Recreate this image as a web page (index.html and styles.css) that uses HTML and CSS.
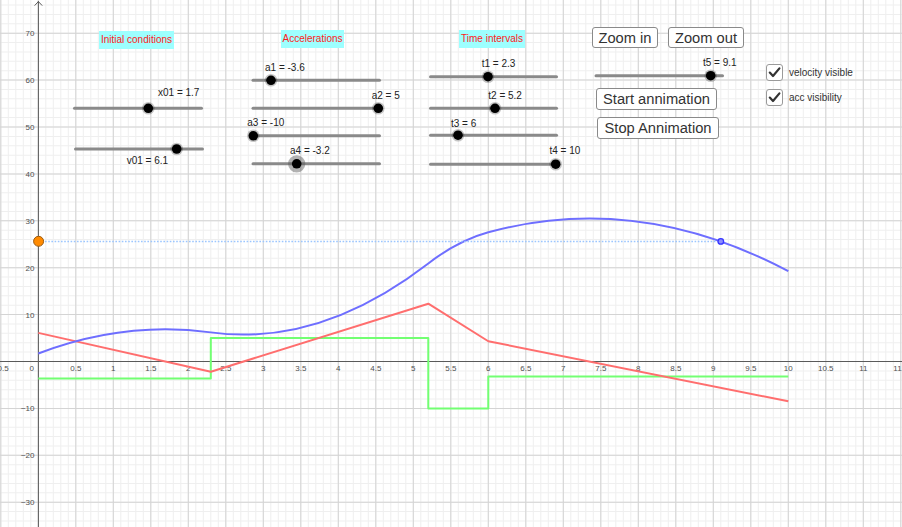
FILE: index.html
```html
<!DOCTYPE html>
<html lang="en">
<head>
<meta charset="utf-8">
<title>Motion graphs</title>
<link rel="stylesheet" href="styles.css">
</head>
<body>
<div class="applet">
  <svg class="canvas" width="902" height="527" viewBox="0 0 902 527" xmlns="http://www.w3.org/2000/svg">
    <!-- grid -->
    <g class="grid">
      <line class="minor" x1="-7.2" y1="263.5" x2="902" y2="263.5" stroke-width="527" stroke-dasharray="1 6.5"/>
      <line class="minor" x1="451" y1="-4.82" x2="451" y2="527" stroke-width="902" stroke-dasharray="1 8.38"/>
      <line class="major" x1="0.3" y1="263.5" x2="902" y2="263.5" stroke-width="527" stroke-dasharray="1 36.5"/>
      <line class="major" x1="451" y1="-14.2" x2="451" y2="527" stroke-width="902" stroke-dasharray="1 45.9"/>
    </g>
    <!-- axes -->
    <g class="axes">
      <line x1="38.4" y1="1" x2="38.4" y2="527"/>
      <line x1="0" y1="361.5" x2="902" y2="361.5"/>
      <polyline points="34.6,5.6 38.4,1.6 42.2,5.6" fill="none"/>
    </g>
    <g class="ticklabels">
      <text class="xl" x="0.8" y="370.7">−0.5</text>
      <text class="yl" x="34" y="370.7">0</text>
      <text class="xl" x="75.8" y="370.7">0.5</text>
      <text class="xl" x="113.3" y="370.7">1</text>
      <text class="xl" x="150.8" y="370.7">1.5</text>
      <text class="xl" x="188.3" y="370.7">2</text>
      <text class="xl" x="225.8" y="370.7">2.5</text>
      <text class="xl" x="263.3" y="370.7">3</text>
      <text class="xl" x="300.8" y="370.7">3.5</text>
      <text class="xl" x="338.3" y="370.7">4</text>
      <text class="xl" x="375.8" y="370.7">4.5</text>
      <text class="xl" x="413.3" y="370.7">5</text>
      <text class="xl" x="450.8" y="370.7">5.5</text>
      <text class="xl" x="488.3" y="370.7">6</text>
      <text class="xl" x="525.8" y="370.7">6.5</text>
      <text class="xl" x="563.3" y="370.7">7</text>
      <text class="xl" x="600.8" y="370.7">7.5</text>
      <text class="xl" x="638.3" y="370.7">8</text>
      <text class="xl" x="675.8" y="370.7">8.5</text>
      <text class="xl" x="713.3" y="370.7">9</text>
      <text class="xl" x="750.8" y="370.7">9.5</text>
      <text class="xl" x="788.3" y="370.7">10</text>
      <text class="xl" x="825.8" y="370.7">10.5</text>
      <text class="xl" x="863.3" y="370.7">11</text>
      <text class="xl" x="900.8" y="370.7">11.5</text>

      <text class="yl" x="34.5" y="36.2">70</text>
      <text class="yl" x="34.5" y="83.1">60</text>
      <text class="yl" x="34.5" y="130">50</text>
      <text class="yl" x="34.5" y="176.9">40</text>
      <text class="yl" x="34.5" y="223.8">30</text>
      <text class="yl" x="34.5" y="270.7">20</text>
      <text class="yl" x="34.5" y="317.6">10</text>
      <text class="yl" x="34.5" y="411.4">−10</text>
      <text class="yl" x="34.5" y="458.3">−20</text>
      <text class="yl" x="34.5" y="505.2">−30</text>
    </g>

    <!-- curves -->
    <polyline class="acc" points="38.3,378.38 210.8,378.38 210.8,338.05 428.3,338.05 428.3,408.4 488.3,408.4 488.3,376.51 788.3,376.51"/>
    <polyline class="vel" points="38.3,332.89 210.8,371.72 428.3,303.72 488.3,341.24 788.3,401.27"/>
    <path class="pos" d="M38.3,353.53 Q124.55,320.63 210.8,332.38 Q319.55,347.21 428.3,263.43 Q458.3,240.32 488.3,232.21 Q638.3,191.69 788.3,271.23"/>

    <line class="trace" x1="45" y1="241.5" x2="716" y2="241.5"/>
    <circle class="pt-orange" cx="38.6" cy="241.3" r="5"/>
    <circle class="pt-blue" cx="720.8" cy="241.4" r="2.8"/>

    <!-- sliders -->
    <g class="slider">
      <line x1="74.5" y1="108.3" x2="201.5" y2="108.3"/>
      <circle class="halo" cx="148.3" cy="108.3" r="6.3"/><circle class="knob" cx="148.3" cy="108.3" r="4.8"/>
      <text x="158" y="96">x01 = 1.7</text>
    </g>
    <g class="slider">
      <line x1="75.5" y1="149" x2="202.5" y2="149"/>
      <circle class="halo" cx="176.7" cy="149" r="6.3"/><circle class="knob" cx="176.7" cy="149" r="4.8"/>
      <text x="126.7" y="164">v01 = 6.1</text>
    </g>

    <g class="slider">
      <line x1="253" y1="80.3" x2="379.5" y2="80.3"/>
      <circle class="halo" cx="271" cy="80.3" r="6.3"/><circle class="knob" cx="271" cy="80.3" r="4.8"/>
      <text x="265" y="70.6">a1 = -3.6</text>
    </g>
    <g class="slider">
      <line x1="253" y1="108.3" x2="379.5" y2="108.3"/>
      <circle class="halo" cx="378.3" cy="108.3" r="6.3"/><circle class="knob" cx="378.3" cy="108.3" r="4.8"/>
      <text x="371.7" y="98.5">a2 = 5</text>
    </g>
    <g class="slider">
      <line x1="253" y1="135.8" x2="379.5" y2="135.8"/>
      <circle class="halo" cx="253.3" cy="135.8" r="6.3"/><circle class="knob" cx="253.3" cy="135.8" r="4.8"/>
      <text x="247.3" y="125.8">a3 = -10</text>
    </g>
    <g class="slider">
      <line x1="253" y1="163.8" x2="379.5" y2="163.8"/>
      <circle class="halo big" cx="296.7" cy="163.8" r="8.6"/><circle class="knob" cx="296.7" cy="163.8" r="4.8"/>
      <text x="290" y="154">a4 = -3.2</text>
    </g>

    <g class="slider">
      <line x1="430.5" y1="76.7" x2="556.5" y2="76.7"/>
      <circle class="halo" cx="488" cy="76.7" r="6.3"/><circle class="knob" cx="488" cy="76.7" r="4.8"/>
      <text x="481.7" y="67.2">t1 = 2.3</text>
    </g>
    <g class="slider">
      <line x1="430.5" y1="108.3" x2="556.5" y2="108.3"/>
      <circle class="halo" cx="495" cy="108.3" r="6.3"/><circle class="knob" cx="495" cy="108.3" r="4.8"/>
      <text x="488.3" y="99">t2 = 5.2</text>
    </g>
    <g class="slider">
      <line x1="430.5" y1="135.2" x2="556.5" y2="135.2"/>
      <circle class="halo" cx="458" cy="135.2" r="6.3"/><circle class="knob" cx="458" cy="135.2" r="4.8"/>
      <text x="451" y="126.5">t3 = 6</text>
    </g>
    <g class="slider">
      <line x1="430.5" y1="164.2" x2="556.5" y2="164.2"/>
      <circle class="halo" cx="555.7" cy="164.2" r="6.3"/><circle class="knob" cx="555.7" cy="164.2" r="4.8"/>
      <text x="549.5" y="154">t4 = 10</text>
    </g>

    <g class="slider">
      <line x1="596" y1="75.7" x2="722.5" y2="75.7"/>
      <circle class="halo" cx="710.7" cy="75.7" r="6.3"/><circle class="knob" cx="710.7" cy="75.7" r="4.8"/>
      <text x="703" y="66">t5 = 9.1</text>
    </g>
  </svg>

  <div class="tag tag-initial">Initial conditions</div>
  <div class="tag tag-acc">Accelerations</div>
  <div class="tag tag-time">Time intervals</div>

  <button class="btn btn-zin" type="button">Zoom in</button>
  <button class="btn btn-zout" type="button">Zoom out</button>
  <button class="btn btn-start" type="button">Start annimation</button>
  <button class="btn btn-stop" type="button">Stop Annimation</button>

  <label class="check check-vel">
    <span class="box"><svg width="15" height="15" viewBox="0 0 15 15"><path d="M2.8 7.6 L6 11 L12.4 3.4"/></svg></span>
    <span class="check-text">velocity visible</span>
  </label>
  <label class="check check-acc">
    <span class="box"><svg width="15" height="15" viewBox="0 0 15 15"><path d="M2.8 7.6 L6 11 L12.4 3.4"/></svg></span>
    <span class="check-text">acc visibility</span>
  </label>
</div>
</body>
</html>
```

FILE: styles.css
```css
html, body {
  margin: 0;
  padding: 0;
  background: #ffffff;
}

body {
  font-family: "Liberation Sans", Arial, sans-serif;
  color: #333333;
}

.applet {
  position: relative;
  width: 902px;
  height: 527px;
  overflow: hidden;
  background: #ffffff;
}

.canvas {
  display: block;
}

.grid line {
  fill: none;
}

.grid .minor {
  stroke: #efefef;
}

.grid .major {
  stroke: #d4d4d4;
}

.axes line,
.axes polyline {
  stroke: #5a5a5a;
  stroke-width: 1;
}

.ticklabels text {
  font-family: "Liberation Sans", Arial, sans-serif;
  font-size: 8px;
  fill: #505050;
}

.ticklabels .xl {
  text-anchor: middle;
}

.ticklabels .yl {
  text-anchor: end;
}

.acc,
.vel,
.pos {
  fill: none;
  stroke-width: 2;
  stroke-linejoin: round;
}

.acc {
  stroke: #72ff72;
}

.vel {
  stroke: #ff6e6e;
}

.pos {
  stroke: #6e6eff;
}

.trace {
  stroke: #9cc6ff;
  stroke-width: 1.6;
  stroke-dasharray: 1.6 1.6;
}

.pt-orange {
  fill: #ff8a00;
  stroke: #9a5a10;
  stroke-width: 1;
}

.pt-blue {
  fill: #8c8cff;
  stroke: #3535ff;
  stroke-width: 1.3;
}

.slider line {
  stroke: #8a8a8a;
  stroke-width: 3;
  stroke-linecap: round;
}

.slider .halo {
  fill: #000000;
  opacity: 0.22;
}

.slider .halo.big {
  fill: #555555;
  opacity: 0.45;
}

.slider .knob {
  fill: #000000;
}

.slider text {
  font-family: "Liberation Sans", Arial, sans-serif;
  font-size: 10px;
  fill: #222222;
}

.tag {
  position: absolute;
  height: 18px;
  line-height: 18px;
  background: #9dffff;
  color: #ff1a1a;
  font-size: 10px;
  text-align: center;
  white-space: nowrap;
}

.tag-initial {
  left: 99px;
  top: 31px;
  width: 75px;
}

.tag-acc {
  left: 281px;
  top: 30px;
  width: 63px;
}

.tag-time {
  left: 459px;
  top: 30px;
  width: 66px;
}

.btn {
  position: absolute;
  box-sizing: border-box;
  margin: 0;
  padding: 0;
  background: #ffffff;
  border: 1px solid #8a8a8a;
  border-radius: 3px;
  font-family: "Liberation Sans", Arial, sans-serif;
  font-size: 14.7px;
  color: #333333;
  text-align: center;
  white-space: nowrap;
}

.btn-zin {
  left: 592px;
  top: 27px;
  width: 66px;
  height: 21px;
}

.btn-zout {
  left: 668px;
  top: 27px;
  width: 76px;
  height: 21px;
}

.btn-start {
  left: 596px;
  top: 88px;
  width: 121px;
  height: 22px;
}

.btn-stop {
  left: 597px;
  top: 117px;
  width: 122px;
  height: 22px;
}

.check {
  position: absolute;
  left: 766px;
  display: flex;
  align-items: center;
  gap: 6px;
  font-size: 10px;
  color: #333333;
}

.check-vel {
  top: 64px;
}

.check-acc {
  top: 89px;
}

.box {
  box-sizing: border-box;
  width: 17px;
  height: 17px;
  border: 1px solid #9a9a9a;
  border-radius: 3px;
  background: #ffffff;
  display: flex;
  align-items: center;
  justify-content: center;
}

.box path {
  fill: none;
  stroke: #333333;
  stroke-width: 2.2;
  stroke-linecap: round;
  stroke-linejoin: round;
}

.check-text {
  line-height: 17px;
}
```
